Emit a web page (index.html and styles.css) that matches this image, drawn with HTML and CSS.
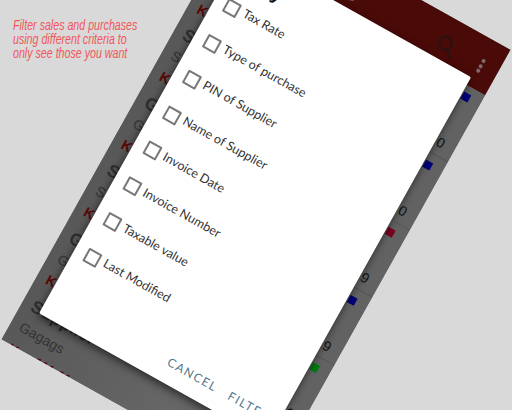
FILE: index.html
```
<!DOCTYPE html>
<html lang="en">
<head>
<meta charset="utf-8">
<title>Filter sales and purchases</title>
<link rel="stylesheet" href="styles.css">
</head>
<body>
<p class="caption">Filter sales and purchases<br>using different criteria to<br>only see those you want</p>
<div class="phone">
  <header class="toolbar">
    <span class="toolbar-title">Sales</span>
    <svg class="search" width="24" height="24" viewBox="0 0 24 24" fill="none" stroke="#2a1212" stroke-width="2.2"><circle cx="10" cy="10" r="6.5"/><path d="M15 15l6 6"/></svg>
    <span class="dots"><i></i><i></i><i></i></span>
  </header>
  <section class="row"><div class="main"><div class="name">Gagags</div><div class="sub">Gagags</div><div class="amount">Kes 0</div></div><div class="side"><i class="tag blue"></i><span class="value">0</span></div></section>
  <section class="row"><div class="main"><div class="name">Supplier</div><div class="sub">Supplier</div><div class="amount">Kes 0</div></div><div class="side"><i class="tag blue"></i><span class="value">0</span></div></section>
  <section class="row"><div class="main"><div class="name">Gagags</div><div class="sub">Gagags</div><div class="amount">Kes 9</div></div><div class="side"><i class="tag red"></i><span class="value">9</span></div></section>
  <section class="row"><div class="main"><div class="name">Supplier</div><div class="sub">Supplier</div><div class="amount">Kes 9</div></div><div class="side"><i class="tag blue"></i><span class="value">9</span></div></section>
  <section class="row"><div class="main"><div class="name">Gagags</div><div class="sub">Gagags</div><div class="amount">Kes 9</div></div><div class="side"><i class="tag green"></i><span class="value">9</span></div></section>
  <section class="row"><div class="main"><div class="name">Supplier</div><div class="sub">Gagags</div><div class="amount">Kes 111 11</div></div><div class="side"><i class="tag blue"></i><span class="value">9</span></div></section>
  <div class="dialog">
    <h2 class="dialog-title">By</h2>
    <ul class="options">
      <li class="option"><i class="box"></i>Tax Rate</li>
      <li class="option"><i class="box"></i>Type of purchase</li>
      <li class="option"><i class="box"></i>PIN of Supplier</li>
      <li class="option"><i class="box"></i>Name of Supplier</li>
      <li class="option"><i class="box"></i>Invoice Date</li>
      <li class="option"><i class="box"></i>Invoice Number</li>
      <li class="option"><i class="box"></i>Taxable value</li>
      <li class="option"><i class="box"></i>Last Modified</li>
    </ul>
    <div class="actions"><span>CANCEL</span><span>FILTER</span></div>
  </div>
</div>
</body>
</html>
```
FILE: styles.css
```
html, body {
  margin: 0;
  height: 410px;
  overflow: hidden;
  background: #d9d9d9;
}
.caption {
  margin: 0;
  padding: 18px 0 0 13px;
  width: 220px;
  font: italic 15px/14px "Liberation Sans", sans-serif;
  color: #f2565c;
  white-space: nowrap;
  transform: scaleX(0.71);
  transform-origin: 13px 0;
}
.phone {
  position: absolute;
  left: 246.3px;
  top: -98.1px;
  width: 303.3px;
  height: 500.7px;
  overflow: hidden;
  transform: rotate(29.2deg);
  transform-origin: 0 0;
  background: #606060;
  font-family: "Liberation Sans", sans-serif;
}
.toolbar {
  height: 51.6px;
  box-sizing: border-box;
  display: flex;
  align-items: center;
  padding: 0 16px 0 98px;
  background: #4a0a08;
}
.toolbar-title { flex: 1; padding-top: 8px; color: #6b5452; font-size: 18px; }
.search { margin: 4px 26px 0 0; }
.dots { display: flex; flex-direction: column; gap: 1.5px; margin: 6px 0 0; }
.dots i { width: 4px; height: 4px; border-radius: 50%; background: #7a6a6a; }
.row {
  height: 77.6px;
  box-sizing: border-box;
  display: flex;
  justify-content: space-between;
  padding: 0 12px 0 10px;
  border-bottom: 1px solid #555;
  background: linear-gradient(90deg, #585858, #666 60%, #626262);
}
.name { height: 24px; padding-top: 4px; font-size: 18px; line-height: 24px; font-weight: bold; color: #2e2e2e; }
.sub { height: 24px; font-size: 14px; line-height: 24px; color: #333; }
.amount { padding-top: 1px; font-size: 14px; line-height: 22px; font-weight: bold; color: #5c0606; white-space: nowrap; }
.side { display: flex; flex-direction: column; align-items: flex-end; }
.tag { width: 8px; height: 8px; margin-top: 7.5px; }
.blue { background: #00007a; }
.red { background: #7a0020; }
.green { background: #007a10; }
.value { margin-top: 39px; font-size: 14px; line-height: 18px; color: #111; }
.dialog {
  position: absolute;
  left: 19.6px;
  top: 43px;
  width: 262.8px;
  height: 417px;
  display: flex;
  flex-direction: column;
  background: #fff;
  border-radius: 2px;
  box-shadow: 0 3px 8px rgba(0, 0, 0, 0.6);
}
.dialog-title {
  height: 24px;
  margin: 0;
  padding: 11px 35px 1px;
  font-size: 18px;
  line-height: 24px;
  color: #111;
}
.options { margin: 0; padding: 0; list-style: none; }
.option {
  height: 40.87px;
  box-sizing: border-box;
  display: flex;
  align-items: center;
  gap: 5px;
  padding: 0 0 3px 12.5px;
  font: 12.5px "Lato", sans-serif;
  color: #333;
}
.box { width: 11px; height: 11px; margin-top: 3px; border: 2px solid #777; border-radius: 1px; }
.actions {
  margin-top: auto;
  display: flex;
  gap: 14px;
  padding: 0 0 11.6px 136.5px;
  font: 12px/18px "Lato", sans-serif;
  letter-spacing: 1.5px;
  color: #55788c;
}
```
